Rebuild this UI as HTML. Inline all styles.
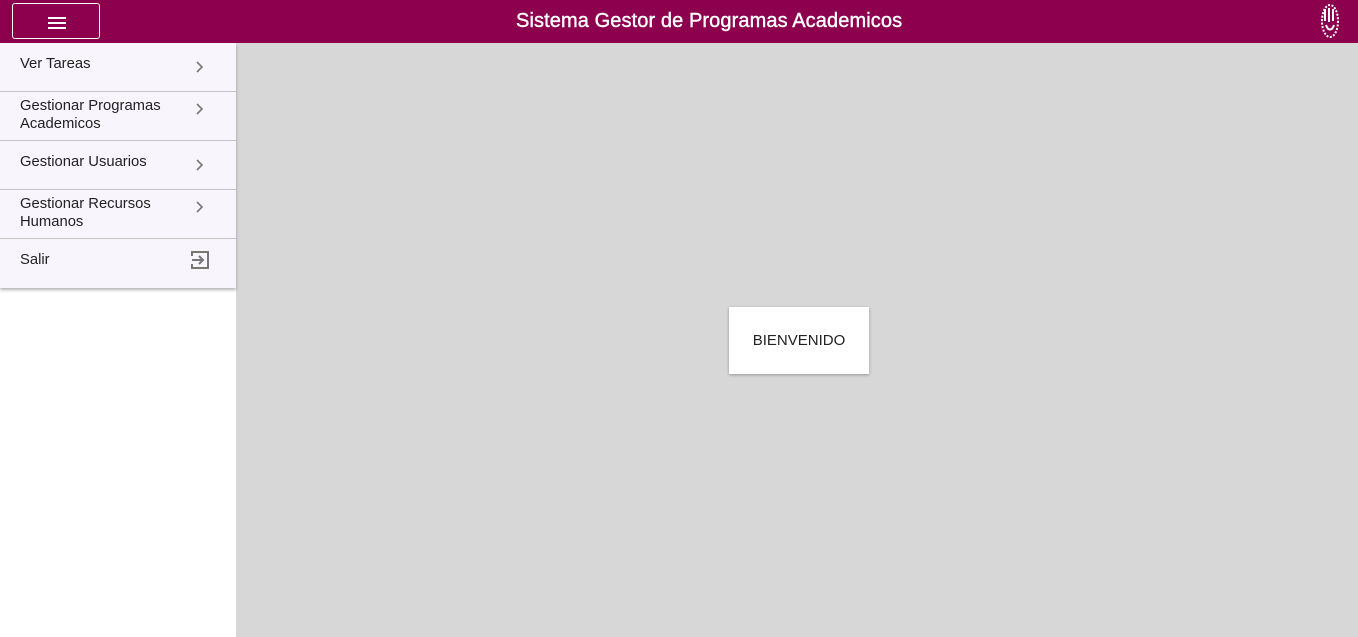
<!DOCTYPE html>
<html><head><meta charset="utf-8"><style>
*{box-sizing:border-box;margin:0;padding:0}
body{width:1358px;height:637px;overflow:hidden;font-family:"Liberation Sans",Roboto,sans-serif;background:#d7d7d7;position:relative}
.hdr{position:absolute;left:0;top:0;width:1358px;height:43px;background:#8d004e;color:#fff}
.hdr h1{position:absolute;left:516px;top:10px;white-space:nowrap;font-size:20px;font-weight:normal;letter-spacing:0.1px;-webkit-text-stroke:0.4px #fff}
.btn{position:absolute;left:12px;top:3px;width:88px;height:36px;border:1px solid #fff;border-radius:3px}
.btn i{position:absolute;left:35px;width:18px;height:2px;background:#fff}
.side{position:absolute;left:0;top:43px;width:236px;height:594px;background:#fff}
.menu{background:#f8f5fd;box-shadow:0 2px 3px rgba(0,0,0,.3)}
.it{height:49px;border-bottom:1px solid #c4c4c4;position:relative;font-size:14.8px;color:#222;padding:12px 0 0 20px;line-height:18px}
.it.two{padding-top:5px}
.it:last-child{border-bottom:none}
.ch{position:absolute;left:195px;top:17px}
.two .ch{top:10px}
.card{position:absolute;left:729px;top:307px;width:140px;height:67px;background:#fff;box-shadow:0 1px 3px rgba(0,0,0,.3);font-size:15px;color:#222;text-align:center;line-height:67px}
</style></head><body>
<div class="hdr"><div class="btn"><i style="top:13px"></i><i style="top:18px"></i><i style="top:23px"></i></div>
<h1>Sistema Gestor de Programas Academicos</h1>
<svg style="position:absolute;left:1320px;top:3px" width="20" height="36" viewBox="0 0 20 36"><ellipse cx="10" cy="18" rx="8" ry="16" fill="none" stroke="#fff" stroke-width="2" stroke-dasharray="2 1.5"/><path d="M5 6v12M9 5v14M13 6v12M6 22c2 6 6 6 8 0" stroke="#fff" stroke-width="2" fill="none"/></svg>
</div>
<div class="side"><div class="menu">
<div class="it">Ver Tareas<svg class="ch" width="10" height="14" viewBox="0 0 10 14"><path d="M2 2l5 5-5 5" fill="none" stroke="#777" stroke-width="1.6"/></svg></div>
<div class="it two">Gestionar Programas<br>Academicos<svg class="ch" width="10" height="14" viewBox="0 0 10 14"><path d="M2 2l5 5-5 5" fill="none" stroke="#777" stroke-width="1.6"/></svg></div>
<div class="it">Gestionar Usuarios<svg class="ch" width="10" height="14" viewBox="0 0 10 14"><path d="M2 2l5 5-5 5" fill="none" stroke="#777" stroke-width="1.6"/></svg></div>
<div class="it two">Gestionar Recursos<br>Humanos<svg class="ch" width="10" height="14" viewBox="0 0 10 14"><path d="M2 2l5 5-5 5" fill="none" stroke="#777" stroke-width="1.6"/></svg></div>
<div class="it">Salir<svg style="position:absolute;left:190px;top:11px" width="20" height="20" viewBox="0 0 20 20"><path d="M2 6V2h16v16H2v-4M2 10h11M9 6l4 4-4 4" fill="none" stroke="#777" stroke-width="2"/></svg></div>
</div></div>
<div class="card">BIENVENIDO</div>
</body></html>
